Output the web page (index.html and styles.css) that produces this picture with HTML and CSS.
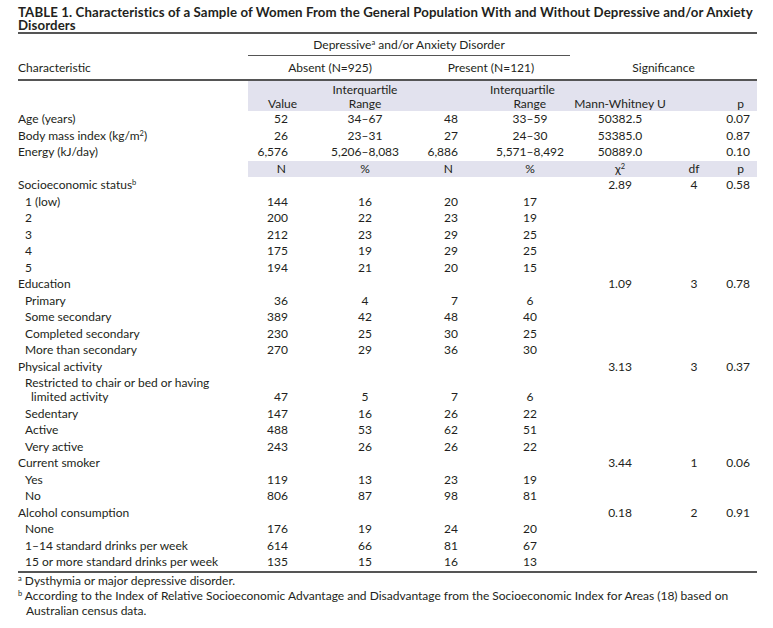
FILE: index.html
```html
<!DOCTYPE html>
<html lang="en">
<head>
<meta charset="utf-8">
<title>Table 1</title>
<link rel="stylesheet" href="styles.css">
</head>
<body>
<div class="page">
  <h1 class="title">TABLE 1. Characteristics of a Sample of Women From the General Population With and Without Depressive and/or Anxiety Disorders</h1>
  <table class="data">
    <colgroup>
      <col class="w-char"><col class="w-av"><col class="w-ai"><col class="w-pv"><col class="w-pi"><col class="w-mw"><col class="w-df"><col class="w-p">
    </colgroup>
    <thead>
      <tr class="hr1">
        <th class="char" rowspan="2">Characteristic</th>
        <th class="group" colspan="4">Depressive<sup>a</sup> and/or Anxiety Disorder</th>
        <th class="sig" colspan="3" rowspan="2">Significance</th>
      </tr>
      <tr class="hr2">
        <th colspan="2">Absent (N=925)</th>
        <th colspan="2">Present (N=121)</th>
      </tr>
      <tr class="hr3">
        <th class="blank"></th>
        <th class="val">Value</th>
        <th class="iqr1">Interquartile<br>Range</th>
        <th></th>
        <th class="iqr2">Interquartile<br>Range</th>
        <th class="mw">Mann-Whitney U</th>
        <th></th>
        <th class="p">p</th>
      </tr>
    </thead>
    <tbody>
      <tr><td>Age (years)</td><td>52</td><td>34–67</td><td>48</td><td>33–59</td><td>50382.5</td><td></td><td>0.07</td></tr>
      <tr><td>Body mass index (kg/m<sup>2</sup>)</td><td>26</td><td>23–31</td><td>27</td><td>24–30</td><td>53385.0</td><td></td><td>0.87</td></tr>
      <tr><td>Energy (kJ/day)</td><td>6,576</td><td>5,206–8,083</td><td>6,886</td><td>5,571–8,492</td><td>50889.0</td><td></td><td>0.10</td></tr>
      <tr class="sub"><td class="blank"></td><td>N</td><td>%</td><td>N</td><td>%</td><td>χ<sup>2</sup></td><td>df</td><td>p</td></tr>
      <tr><td>Socioeconomic status<sup>b</sup></td><td></td><td></td><td></td><td></td><td>2.89</td><td>4</td><td>0.58</td></tr>
      <tr class="item"><td>1 (low)</td><td>144</td><td>16</td><td>20</td><td>17</td><td></td><td></td><td></td></tr>
      <tr class="item"><td>2</td><td>200</td><td>22</td><td>23</td><td>19</td><td></td><td></td><td></td></tr>
      <tr class="item"><td>3</td><td>212</td><td>23</td><td>29</td><td>25</td><td></td><td></td><td></td></tr>
      <tr class="item"><td>4</td><td>175</td><td>19</td><td>29</td><td>25</td><td></td><td></td><td></td></tr>
      <tr class="item"><td>5</td><td>194</td><td>21</td><td>20</td><td>15</td><td></td><td></td><td></td></tr>
      <tr><td>Education</td><td></td><td></td><td></td><td></td><td>1.09</td><td>3</td><td>0.78</td></tr>
      <tr class="item"><td>Primary</td><td>36</td><td>4</td><td>7</td><td>6</td><td></td><td></td><td></td></tr>
      <tr class="item"><td>Some secondary</td><td>389</td><td>42</td><td>48</td><td>40</td><td></td><td></td><td></td></tr>
      <tr class="item"><td>Completed secondary</td><td>230</td><td>25</td><td>30</td><td>25</td><td></td><td></td><td></td></tr>
      <tr class="item"><td>More than secondary</td><td>270</td><td>29</td><td>36</td><td>30</td><td></td><td></td><td></td></tr>
      <tr><td>Physical activity</td><td></td><td></td><td></td><td></td><td>3.13</td><td>3</td><td>0.37</td></tr>
      <tr class="item wrap"><td>Restricted to chair or bed or having limited activity</td><td>47</td><td>5</td><td>7</td><td>6</td><td></td><td></td><td></td></tr>
      <tr class="item"><td>Sedentary</td><td>147</td><td>16</td><td>26</td><td>22</td><td></td><td></td><td></td></tr>
      <tr class="item"><td>Active</td><td>488</td><td>53</td><td>62</td><td>51</td><td></td><td></td><td></td></tr>
      <tr class="item"><td>Very active</td><td>243</td><td>26</td><td>26</td><td>22</td><td></td><td></td><td></td></tr>
      <tr><td>Current smoker</td><td></td><td></td><td></td><td></td><td>3.44</td><td>1</td><td>0.06</td></tr>
      <tr class="item"><td>Yes</td><td>119</td><td>13</td><td>23</td><td>19</td><td></td><td></td><td></td></tr>
      <tr class="item"><td>No</td><td>806</td><td>87</td><td>98</td><td>81</td><td></td><td></td><td></td></tr>
      <tr><td>Alcohol consumption</td><td></td><td></td><td></td><td></td><td>0.18</td><td>2</td><td>0.91</td></tr>
      <tr class="item"><td>None</td><td>176</td><td>19</td><td>24</td><td>20</td><td></td><td></td><td></td></tr>
      <tr class="item"><td>1–14 standard drinks per week</td><td>614</td><td>66</td><td>81</td><td>67</td><td></td><td></td><td></td></tr>
      <tr class="item last"><td>15 or more standard drinks per week</td><td>135</td><td>15</td><td>16</td><td>13</td><td></td><td></td><td></td></tr>
    </tbody>
  </table>
  <div class="notes">
    <p class="note"><sup>a</sup> Dysthymia or major depressive disorder.</p>
    <p class="note"><sup>b</sup> According to the Index of Relative Socioeconomic Advantage and Disadvantage from the Socioeconomic Index for Areas (18) based on Australian census data.</p>
  </div>
</div>
</body>
</html>
```
FILE: styles.css
```css
html, body {
  margin: 0;
  padding: 0;
  background: #ffffff;
}

body {
  font-family: "Lato", "Liberation Sans", sans-serif;
  color: #231f20;
  font-size: 12px;
}

.page {
  width: 739px;
  padding: 5px 0 0 18px;
}

.title {
  margin: 0 0 1px;
  padding-top: 1px;
  font-size: 13.25px;
  line-height: 12.5px;
  letter-spacing: 0.1px;
  font-weight: 700;
  color: #231f20;
}

.data {
  width: 739px;
  border-collapse: collapse;
  table-layout: fixed;
  border-top: 2px solid #555555;
  border-bottom: 2px solid #555555;
}

.w-char { width: 230px; }
.w-av { width: 70px; }
.w-ai { width: 94px; }
.w-pv { width: 78px; }
.w-pi { width: 80px; }
.w-mw { width: 100px; }
.w-df { width: 48px; }
.w-p { width: 39px; }

th {
  font-weight: 400;
  line-height: 14px;
}

sup {
  font-size: 7.5px;
  line-height: 0;
  vertical-align: 4px;
}

.hr1 th {
  padding: 4px 0 3px;
}

.hr1 .char {
  text-align: left;
  vertical-align: bottom;
  border-bottom: 2px solid #555555;
  padding-bottom: 4px;
}

.hr1 .group {
  border-bottom: 1px solid #555555;
  text-align: center;
}

.hr1 .sig {
  vertical-align: bottom;
  text-align: center;
  border-bottom: 2px solid #555555;
  padding-bottom: 4px;
}

.hr2 th {
  padding: 5px 0 4px;
  border-bottom: 2px solid #555555;
  text-align: center;
}

.hr3 th {
  background: #e2e2ee;
  padding: 2px 0 0;
  vertical-align: bottom;
  text-align: center;
}

.hr3 .blank,
.sub .blank {
  background: #ffffff;
}

.hr3 .val {
  text-align: right;
  padding-right: 21px;
}

.hr3 .iqr2 {
  text-align: right;
  padding-right: 24px;
}

.hr3 .mw {
  text-align: center;
  padding-right: 0;
}

.hr3 .p {
  text-align: center;
  padding-left: 6px;
}

td {
  padding: 1px 0 1.5px;
  line-height: 14px;
  vertical-align: bottom;
  white-space: nowrap;
}

td:nth-child(2) { text-align: right; padding-right: 30px; }
td:nth-child(3) { text-align: center; padding-right: 0; }
td:nth-child(4) { text-align: right; padding-right: 32px; }
td:nth-child(5) { text-align: center; }
td:nth-child(6) { text-align: center; }
td:nth-child(7) { text-align: center; }
td:nth-child(8) { text-align: right; padding-right: 7px; }

.sub td {
  background: #e2e2ee;
}

.sub td:nth-child(2) { text-align: right; padding-right: 32px; }
.sub td:nth-child(4) { text-align: right; padding-right: 37px; }
.sub td:nth-child(8) { text-align: center; padding-left: 6px; padding-right: 0; }

.item td:first-child {
  padding-left: 7px;
}

.wrap td:first-child {
  white-space: normal;
  padding-left: 13px;
  text-indent: -6px;
  padding-right: 20px;
}

.notes {
  padding-top: 0;
}

.note {
  margin: 0;
  line-height: 15px;
  font-size: 12px;
  padding-left: 8px;
  text-indent: -8px;
}

.note sup {
  vertical-align: 4px;
}
```
